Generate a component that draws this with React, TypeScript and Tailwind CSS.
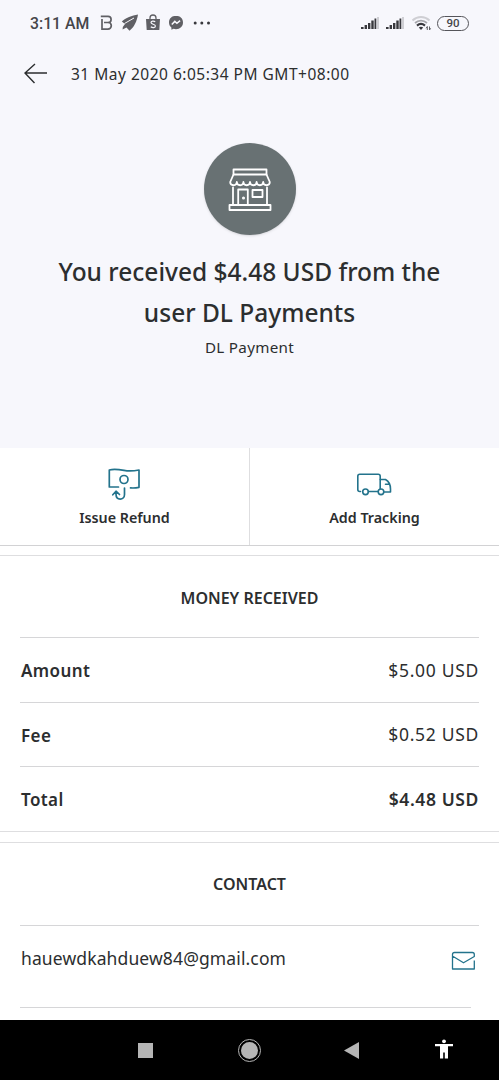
import type { ReactNode } from "react";

const rows = [
  { label: "Amount", value: "$5.00 USD", strong: false },
  { label: "Fee", value: "$0.52 USD", strong: false },
  { label: "Total", value: "$4.48 USD", strong: true },
];

function SignalIcon() {
  return (
    <svg width="20" height="14" viewBox="0 0 20 14" aria-hidden="true">
      <g fill="#38383d">
        <rect x="1" y="11" width="2.6" height="2" />
        <rect x="4.6" y="9" width="2.4" height="4" />
        <rect x="8" y="7" width="2.4" height="6" />
        <rect x="11.3" y="4.5" width="2.4" height="8.5" />
        <rect x="14.5" y="2.5" width="1.8" height="10.5" />
      </g>
      <rect x="17" y="1" width="2" height="12" fill="#cfcfd4" />
    </svg>
  );
}

function NotificationIcons() {
  return (
    <svg width="112" height="20" viewBox="98 13 112 20" className="ml-2" aria-hidden="true">
      <path
        d="M99.800 16.300h7.200a3.100 3.100 0 0 1 0 6.200H103M107 22.500a3.300 3.300 0 0 1 0 6.600H101V19"
        fill="none"
        stroke="#606065"
        strokeWidth="1.700"
      />
      <path
        d="M137 14.500C131 15.500 124.500 18 120.800 21.600L124 24 121.800 27 121.600 29.500 125.500 27.500 128.500 30.700C133 27.500 136 21 137 14.500z"
        fill="#606065"
      />
      <path d="m123.500 23.500 9.500-5.500" stroke="#f7f7fc" strokeWidth="1" />
      <path d="M145 19h14l-.7 11h-12.6z" fill="#606065" />
      <path d="M149 19v-1a3 3 0 0 1 6 0v1" fill="none" stroke="#606065" strokeWidth="1.3" />
      <path
        d="M154.2 21.8c-1.4-1.2-4.2-1-4.2.8 0 2 4.4 1.2 4.4 3.4 0 1.9-3 2-4.6.8"
        fill="none"
        stroke="#f7f7fc"
        strokeWidth="1.2"
      />
      <path
        d="M175 15.8c-4.1 0-7 2.8-7 6.7 0 2.1.9 3.9 2.4 5.1v2.2l2.2-1c.8.2 1.6.4 2.4.4 4.100 0 7-2.800 7-6.700s-2.900-6.700-7-6.700z"
        fill="#606065"
      />
      <path d="m170.8 24.5 3-3.100 2.100 1.900 3.200-2.600" fill="none" stroke="#f7f7fc" strokeWidth="1.5" />
      <g fill="#38383d">
        <circle cx="194.200" cy="23" r="1.500" />
        <circle cx="200.800" cy="23" r="1.500" />
        <circle cx="207.500" cy="23" r="1.500" />
      </g>
    </svg>
  );
}

function WifiIcon() {
  return (
    <svg width="21" height="16" viewBox="0 0 21 16" className="ml-[6px]" fill="none" aria-hidden="true">
      <path d="M1.500 5.500c5-4.600 12-4.600 17 0" stroke="#cfcfd4" strokeWidth="2" />
      <path d="M4 8c3.500-3.200 8.500-3.200 12 0" stroke="#a5a5aa" strokeWidth="1.800" />
      <path d="M6 10.600c2.400-2 5.600-2 8 0" stroke="#38383d" strokeWidth="2.200" />
      <path d="m7.800 12.500 2.200 2.500 2.200-2.500c-1.300-1-3.100-1-4.400 0z" fill="#38383d" />
      <path d="M16.300 11.500v3.500M15.100 13.300l1.200-1.800M18.500 11.500v3.500l1.200-1.700" stroke="#606065" />
    </svg>
  );
}

function StatusBar() {
  return (
    <div className="flex h-[46px] items-center pl-[30px] pr-[30px] font-['Roboto',sans-serif] text-[#45454a]">
      <span className="w-[61px] whitespace-nowrap pt-0.5 text-[15.800px] font-medium">3:11 AM</span>
      <NotificationIcons />
      <div className="ml-auto flex items-center">
        <SignalIcon />
        <span className="ml-[5px] flex">
          <SignalIcon />
        </span>
        <WifiIcon />
        <span className="ml-[5px] flex h-[15px] w-[32px] items-center justify-center rounded-full border-[1.500px] border-[#55555a] pt-px text-[11.500px] leading-none font-medium">
          90
        </span>
      </div>
    </div>
  );
}

function StoreIcon() {
  return (
    <svg
      width="44"
      height="46"
      viewBox="0 0 44 46"
      className="mt-px"
      fill="none"
      stroke="#fff"
      strokeWidth="1.800"
      strokeLinejoin="round"
      strokeLinecap="round"
      aria-hidden="true"
    >
      <path d="M5.500 2.500h33v5h-33z" />
      <path d="M5.500 7.500 2.200 15c0 4.300 6.600 4.300 6.600 0 0 4.300 6.600 4.300 6.600 0 0 4.300 6.600 4.300 6.600 0 0 4.300 6.600 4.300 6.600 0 0 4.300 6.600 4.300 6.600 0 0 4.300 6.600 4.300 6.600 0l-3.300-7.500" />
      <path d="M5 20.500v17M39 20.500v17M10.200 37.500V22.500h9.600v15M24.500 23h10v7h-10z" />
      <path d="M1.500 38h41v5h-41z" />
      <circle cx="15.500" cy="31" r="0.600" fill="#fff" />
    </svg>
  );
}

function RefundIcon() {
  return (
    <svg
      width="34"
      height="34"
      viewBox="108 466 34 34"
      fill="none"
      stroke="#23738c"
      strokeWidth="1.700"
      strokeLinejoin="round"
      strokeLinecap="round"
      aria-hidden="true"
    >
      <path d="M118.500 486h-9.200v-17c5-1.200 9.500-.5 14.700.400 5.200 1 10 .6 15-.4v17.300c-3 .7-5.500.900-8.500.600" />
      <circle cx="124" cy="478.500" r="4" />
      <path d="M124.500 487v6.500c0 6-8.500 6.500-8.500-.5v-2.300M112.800 493.800l3.200-3.600 3.500 3.300" />
    </svg>
  );
}

function TruckIcon() {
  return (
    <svg
      width="36"
      height="24"
      viewBox="357 472 36 24"
      fill="none"
      stroke="#23738c"
      strokeWidth="1.600"
      strokeLinejoin="round"
      strokeLinecap="round"
      aria-hidden="true"
    >
      <path d="M360.500 491.500h-.700a2 2 0 0 1-2-2V476.200a2 2 0 0 1 2-2h18.400a2 2 0 0 1 2 2v12.300M368.500 491.500h9.500" />
      <path d="M380.300 479.500h5.200c3.500 2 5 6 5 9.500v3h-6M389 484.300h-3.500" />
      <circle cx="365.500" cy="491.800" r="2.800" />
      <circle cx="381" cy="491.800" r="2.800" />
    </svg>
  );
}

function MailIcon() {
  return (
    <svg
      width="25"
      height="20"
      viewBox="0 0 25 20"
      fill="none"
      stroke="#23738c"
      strokeWidth="1.300"
      strokeLinejoin="round"
      aria-hidden="true"
    >
      <path d="M23.300 9.500V18H1.500V3.500q0-2 2-2h17.800q2 0 2 2V5.500L12.500 11.800 1.800 5.300" />
    </svg>
  );
}

function Action({ label, children }: { label: string; children: ReactNode }) {
  return (
    <button type="button" className="flex flex-1 flex-col items-center">
      <span className="mt-4 flex h-[40px] items-center justify-center">{children}</span>
      <span className="mt-0.5 whitespace-nowrap text-[14.300px] leading-6 font-semibold">{label}</span>
    </button>
  );
}

function SectionTitle({ children }: { children: ReactNode }) {
  return (
    <h2 className="flex h-[82px] items-center justify-center whitespace-nowrap pt-px text-[16px] font-semibold">
      {children}
    </h2>
  );
}

function NavigationBar() {
  return (
    <nav className="flex h-[60px] items-center bg-black pl-[138px]">
      <span className="h-[15px] w-[15px] bg-[#b5b5b5]" />
      <span className="ml-[85px] flex h-[23px] w-[23px] items-center justify-center rounded-full border-[1.500px] border-[#b5b5b5]">
        <span className="h-[17px] w-[17px] rounded-full bg-[#b5b5b5]" />
      </span>
      <svg width="15" height="17" viewBox="0 0 15 17" className="ml-[83px]" aria-hidden="true">
        <path d="M15 0v17L0 8.500z" fill="#b5b5b5" />
      </svg>
      <svg width="18" height="20" viewBox="0 0 18 20" className="ml-[75.500px] mb-0.5" fill="#fff" aria-hidden="true">
        <circle cx="9" cy="2.300" r="1.900" />
        <path d="M0 5h18v2.200h-5V19.500H9.800v-6H8.200v6H5V7.200H0z" />
      </svg>
    </nav>
  );
}

export default function App() {
  return (
    <div className="flex h-[1080px] w-[499px] flex-col overflow-hidden bg-white font-['Noto_Sans',sans-serif] text-[#2c2e2f]">
      <header className="h-[448px] bg-[#f7f7fc]">
        <StatusBar />
        <div className="flex h-[56px] items-center pl-6">
          <svg width="24" height="22" viewBox="0 0 24 22" fill="none" stroke="#2c2e2f" strokeWidth="1.400" aria-hidden="true">
            <path d="M23 10H1M11 1 1 10l9.500 10" />
          </svg>
          <p className="ml-[23px] whitespace-nowrap pt-0.5 text-[15.500px] tracking-[0.500px]">
            31 May 2020 6:05:34 PM GMT+08:00
          </p>
        </div>
        <div className="flex flex-col items-center pt-[41px]">
          <div className="flex h-[92px] w-[92px] items-center justify-center rounded-full bg-[#687173] shadow-sm">
            <StoreIcon />
          </div>
          <h1 className="mt-4 flex flex-col items-center whitespace-nowrap text-[24.500px] leading-[41px] font-medium">
            <span>You received $4.48 USD from the</span>
            <span>user DL Payments</span>
          </h1>
          <p className="mt-0.5 whitespace-nowrap text-[15.200px] leading-6 tracking-[0.300px]">DL Payment</p>
        </div>
      </header>
      <div className="flex h-[98px] divide-x divide-[#dedee0] border-b border-[#d2d2d4]">
        <Action label="Issue Refund">
          <RefundIcon />
        </Action>
        <Action label="Add Tracking">
          <TruckIcon />
        </Action>
      </div>
      <section className="mt-[9px] -mb-px border-t border-[#dedee0]">
        <div className="-mb-px">
          <SectionTitle>MONEY RECEIVED</SectionTitle>
        </div>
        <dl className="px-5">
          {rows.map((row) => (
            <div
              key={row.label}
              className="flex h-[64.500px] items-center justify-between border-t border-[#d6d6d8] pl-px text-[17px]"
            >
              <dt className="pt-0.5 font-semibold tracking-[0.400px]">{row.label}</dt>
              <dd className={row.strong ? "text-[17.500px] font-semibold tracking-[0.600px]" : "text-[17.500px] tracking-[0.700px]"}>
                {row.value}
              </dd>
            </div>
          ))}
        </dl>
        <div className="border-t border-[#dedee0]" />
      </section>
      <section className="mt-[11px] flex-1 border-t border-[#dedee0]">
        <SectionTitle>CONTACT</SectionTitle>
        <div className="mx-5 flex h-[82px] items-start justify-between border-t border-[#d6d6d8] pt-5 pl-px">
          <span className="text-[17.500px] leading-6 tracking-[0.120px]">hauewdkahduew84@gmail.com</span>
          <span className="mt-[5px] mr-[3px]">
            <MailIcon />
          </span>
        </div>
        <div className="mr-7 ml-5 border-t border-[#d6d6d8]" />
      </section>
      <NavigationBar />
    </div>
  );
}
